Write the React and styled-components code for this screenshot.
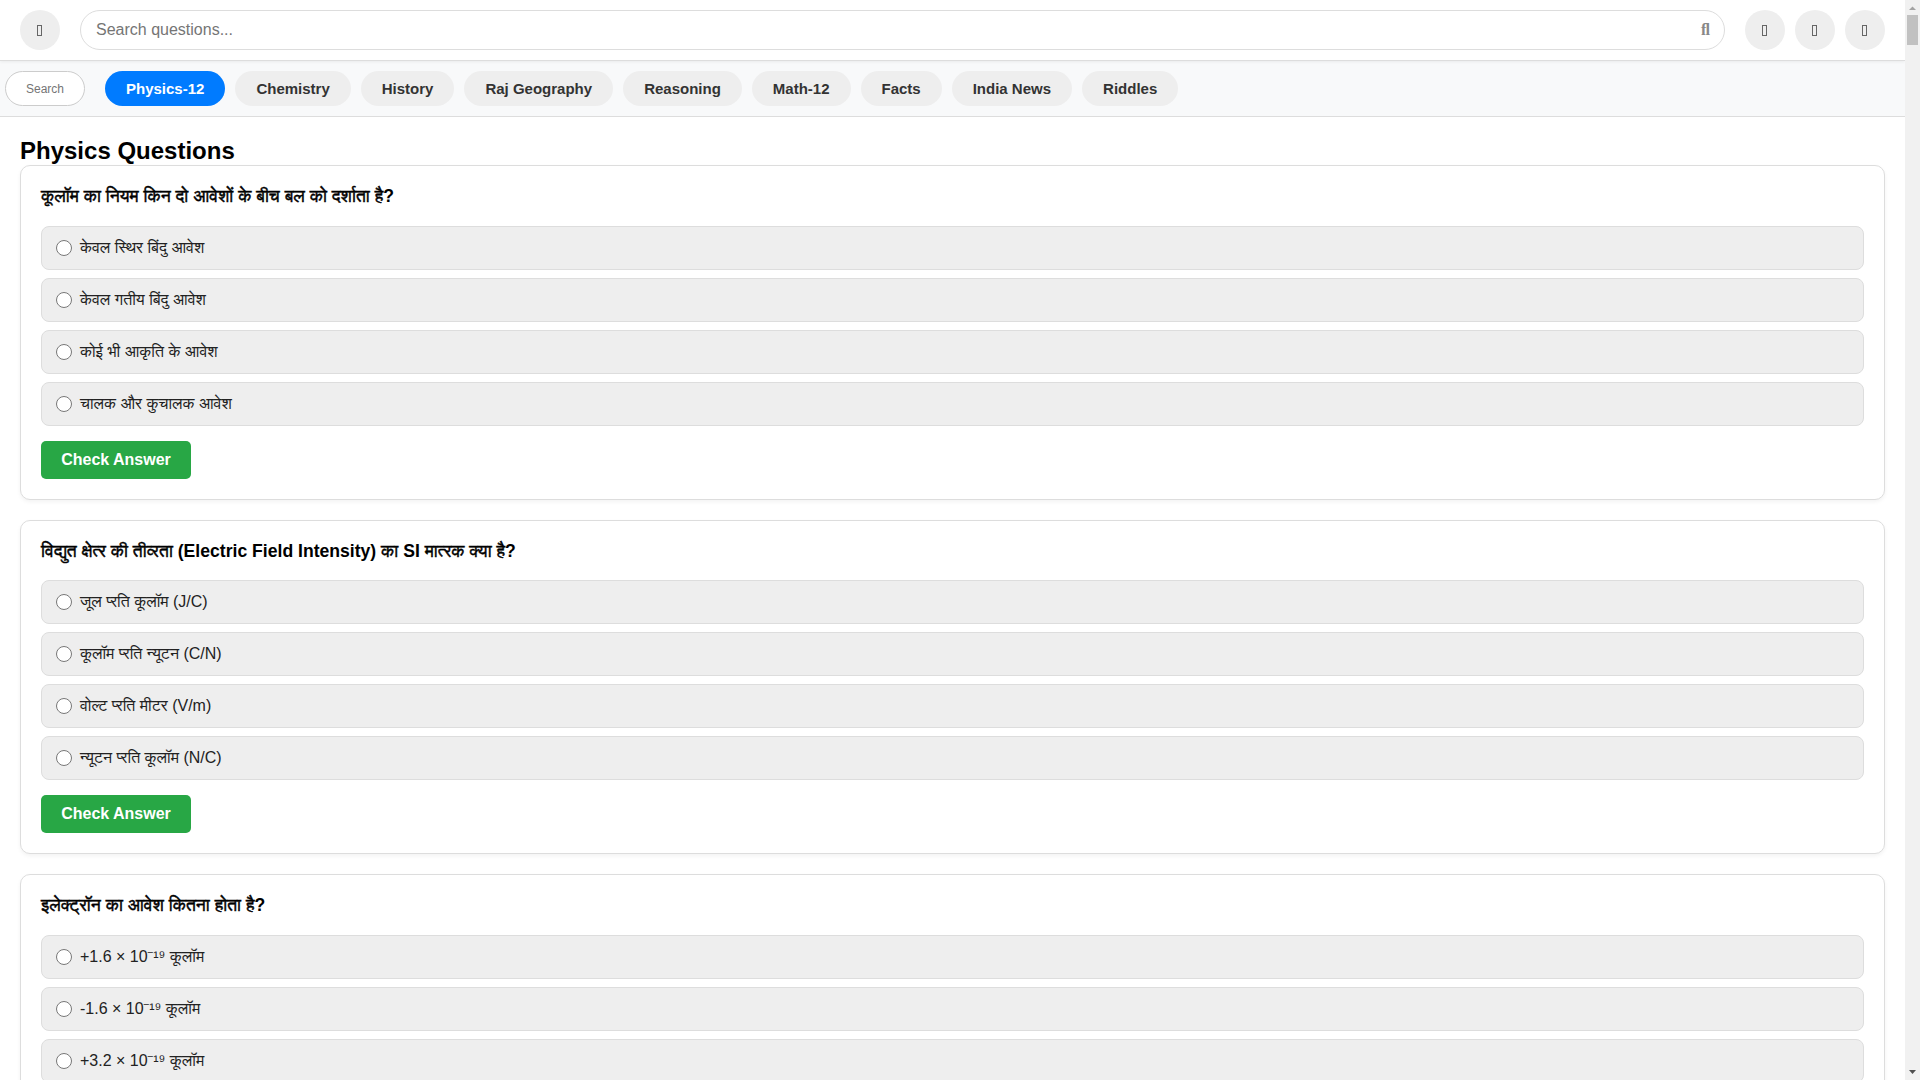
import React, { useState } from 'react';
import styled, { createGlobalStyle } from 'styled-components';

const GlobalStyle = createGlobalStyle`
  html, body {
    margin: 0;
    padding: 0;
    background: #fff;
    color: #000;
    font-family: "Liberation Sans", FreeSans, sans-serif;
  }
  * {
    box-sizing: border-box;
  }
`;

const Page = styled.div`
  margin-right: 15px;
`;

const Header = styled.header`
  display: flex;
  align-items: center;
  gap: 20px;
  height: 61px;
  padding: 10px 20px;
  background: #fff;
  border-bottom: 1px solid #ddd;
  box-shadow: 0 1px 3px rgba(0, 0, 0, 0.06);
  position: relative;
`;

const IconButton = styled.button`
  display: flex;
  flex: none;
  align-items: center;
  justify-content: center;
  width: 40px;
  height: 40px;
  padding: 0;
  border: none;
  border-radius: 50%;
  background: #eee;
  cursor: pointer;
`;

// icon font never loaded on the page, so the buttons show an empty glyph box
const MissingGlyph = styled.span`
  display: block;
  width: 5px;
  height: 11px;
  margin-right: 1px;
  border: 1px solid #666;
`;

const SearchBox = styled.div`
  flex: 1;
  position: relative;
`;

const SearchInput = styled.input`
  display: block;
  width: 100%;
  height: 40px;
  padding: 0 40px 0 15px;
  border: 1px solid #ddd;
  border-radius: 20px;
  font-family: inherit;
  font-size: 16px;
  outline: none;
`;

const SearchIcon = styled.span`
  position: absolute;
  top: 50%;
  right: 15px;
  transform: translateY(-50%);
  color: #888;
  font-family: "Liberation Serif", serif;
  font-size: 16px;
  font-weight: bold;
`;

const HeaderActions = styled.div`
  display: flex;
  gap: 10px;
`;

const CategoryBar = styled.nav`
  display: flex;
  align-items: center;
  gap: 10px;
  padding: 10px 5px;
  background: #f8f9fa;
  border-bottom: 1px solid #ddd;
`;

const CategorySearch = styled.input`
  width: 80px;
  height: 35px;
  margin-right: 10px;
  padding: 5px 20px;
  border: 1px solid #ccc;
  border-radius: 20px;
  font-family: inherit;
  font-size: 12px;
  outline: none;
`;

const Pill = styled.button`
  height: 35px;
  padding: 0 20px;
  border: 1px solid transparent;
  border-radius: 20px;
  background: ${(p) => (p.$active ? '#007bff' : '#eee')};
  color: ${(p) => (p.$active ? '#fff' : '#333')};
  font-family: inherit;
  font-size: 15px;
  font-weight: bold;
  cursor: pointer;
`;

const Main = styled.main`
  padding: 20px;
`;

const Title = styled.h2`
  margin: 0;
  font-size: 24px;
  line-height: 28px;
  font-weight: bold;
`;

const Card = styled.section`
  margin-bottom: 20px;
  padding: 20px;
  background: #fff;
  border: 1px solid #ddd;
  border-radius: 10px;
  box-shadow: 0 2px 4px rgba(0, 0, 0, 0.05);
`;

// hindi only comes in a regular cut here, so it is thickened by a stroke
const Question = styled.p`
  margin: 0 0 18px;
  font-size: 17.6px;
  line-height: 21.5px;
  font-weight: normal;
  -webkit-text-stroke: 0.45px #000;
`;

const Latin = styled.b`
  -webkit-text-stroke: 0;
`;

const Option = styled.label`
  display: flex;
  align-items: center;
  height: 44px;
  margin-bottom: 8px;
  padding: 0 15px;
  background: #eee;
  border: 1px solid #ddd;
  border-radius: 8px;
  font-size: 16px;
  color: #222;
  cursor: pointer;
`;

const Radio = styled.input`
  flex: none;
  width: 16px;
  height: 16px;
  margin: 0 8px 0 -1px;
`;

const CheckButton = styled.button`
  display: block;
  width: 150px;
  height: 38px;
  margin-top: 15px;
  padding: 0;
  border: none;
  border-radius: 5px;
  background: #28a745;
  color: #fff;
  font-family: inherit;
  font-size: 16px;
  font-weight: bold;
  cursor: pointer;
`;

const Scrollbar = styled.div`
  position: fixed;
  top: 0;
  right: 0;
  bottom: 0;
  display: flex;
  flex-direction: column;
  align-items: center;
  width: 15px;
  background: #f1f1f1;
`;

const ScrollArrow = styled.svg`
  flex: none;
  display: block;
  width: 15px;
  height: 15px;
  fill: ${(p) => p.$color};
`;

const ScrollTrack = styled.div`
  flex: 1;
  width: 100%;
  padding: 0 2px;
`;

const ScrollThumb = styled.div`
  height: 30px;
  background: #c1c1c1;
`;

const categories = ['Physics-12', 'Chemistry', 'History', 'Raj Geography', 'Reasoning', 'Math-12', 'Facts', 'India News', 'Riddles'];

// keep the consonant before ra as a half form instead of the joined one
const halfRa = (s) => s.replace(/्र/g, '्\u200dर');

const questions = [
  {
    text: <>कूलॉम का नियम किन दो आवेशों के बीच बल को दर्शाता है<Latin>?</Latin></>,
    options: ['केवल स्थिर बिंदु आवेश', 'केवल गतीय बिंदु आवेश', 'कोई भी आकृति के आवेश', 'चालक और कुचालक आवेश'],
  },
  {
    text: <>{halfRa('विद्युत क्षेत्र की तीव्रता ')}<Latin>(Electric Field Intensity)</Latin> का <Latin>SI</Latin> {halfRa('मात्रक क्या है')}<Latin>?</Latin></>,
    options: ['जूल प्रति कूलॉम (J/C)', 'कूलॉम प्रति न्यूटन (C/N)', 'वोल्ट प्रति मीटर (V/m)', 'न्यूटन प्रति कूलॉम (N/C)'],
  },
  {
    text: <>{halfRa('इलेक्ट्रॉन का आवेश कितना होता है')}<Latin>?</Latin></>,
    options: ['+1.6 × 10⁻¹⁹ कूलॉम', '-1.6 × 10⁻¹⁹ कूलॉम', '+3.2 × 10⁻¹⁹ कूलॉम', '-3.2 × 10⁻¹⁹ कूलॉम'],
  },
];

function QuestionCard({ item, index }) {
  const [picked, setPicked] = useState(null);

  return (
    <Card>
      <Question>{item.text}</Question>
      {item.options.map((opt, i) => (
        <Option key={i}>
          <Radio type="radio" name={'q' + index} checked={picked === i} onChange={() => setPicked(i)} />
          {halfRa(opt)}
        </Option>
      ))}
      <CheckButton>Check Answer</CheckButton>
    </Card>
  );
}

export default function App() {
  return (
    <Page>
      <GlobalStyle />
      <Header>
        <IconButton><MissingGlyph /></IconButton>
        <SearchBox>
          <SearchInput placeholder="Search questions..." />
          <SearchIcon>ﬂ</SearchIcon>
        </SearchBox>
        <HeaderActions>
          <IconButton><MissingGlyph /></IconButton>
          <IconButton><MissingGlyph /></IconButton>
          <IconButton><MissingGlyph /></IconButton>
        </HeaderActions>
      </Header>
      <CategoryBar>
        <CategorySearch placeholder="Search" />
        {categories.map((c, i) => (
          <Pill key={c} $active={i === 0}>{c}</Pill>
        ))}
      </CategoryBar>
      <Main>
        <Title>Physics Questions</Title>
        {questions.map((q, i) => (
          <QuestionCard key={i} item={q} index={i} />
        ))}
      </Main>
      <Scrollbar>
        <ScrollArrow $color="#a3a3a3" viewBox="0 0 15 15"><path d="M4 10 L7.5 6.5 L11 10 Z" /></ScrollArrow>
        <ScrollTrack><ScrollThumb /></ScrollTrack>
        <ScrollArrow $color="#505050" viewBox="0 0 15 15"><path d="M4 5 L11 5 L7.5 9 Z" /></ScrollArrow>
      </Scrollbar>
    </Page>
  );
}
